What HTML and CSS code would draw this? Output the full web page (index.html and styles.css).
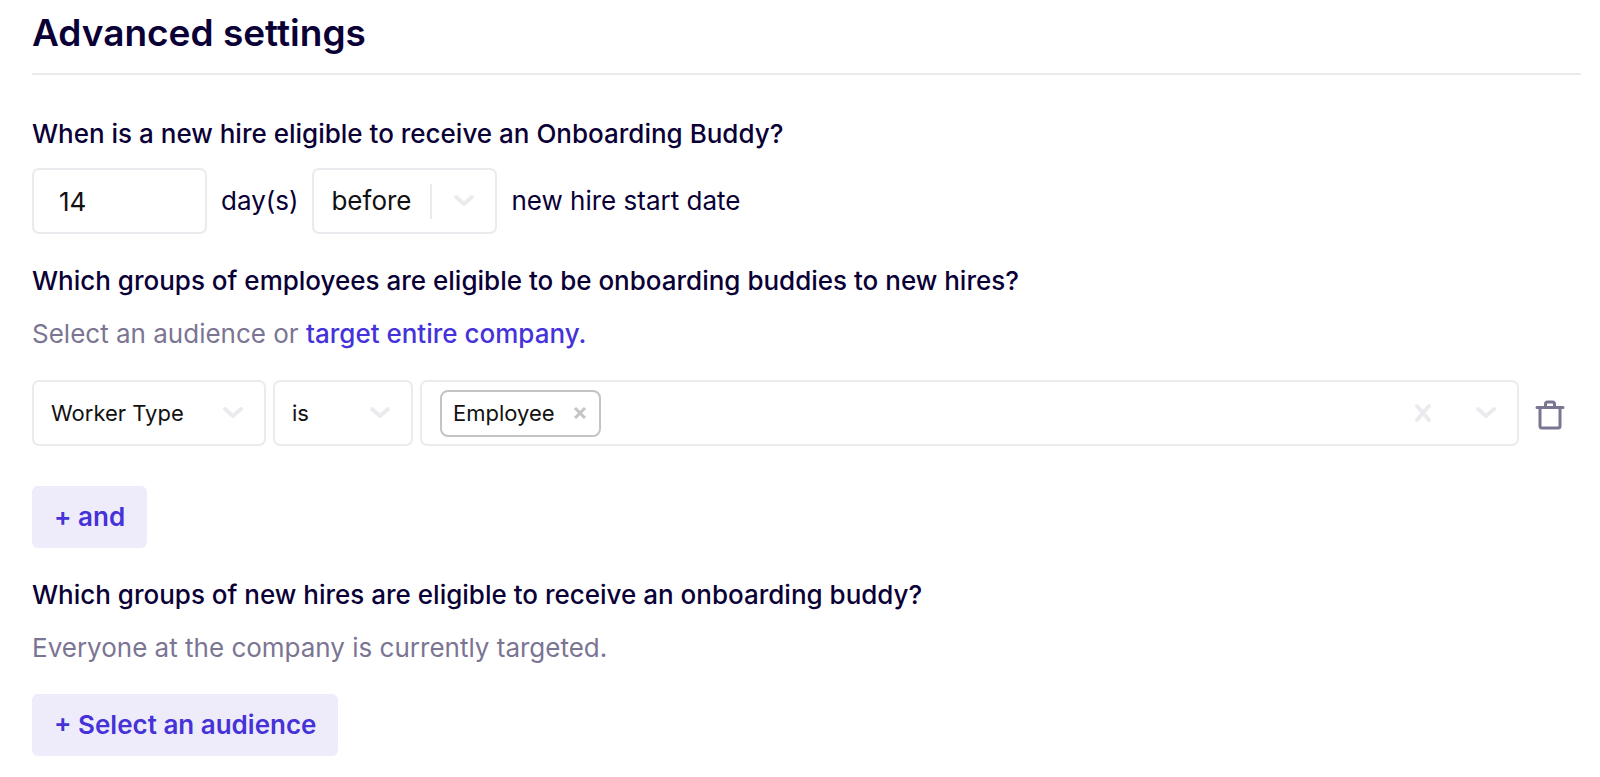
FILE: index.html
```html
<!DOCTYPE html>
<html lang="en">
<head>
<meta charset="utf-8">
<title>Advanced settings</title>
<link rel="stylesheet" href="styles.css">
</head>
<body>
<svg class="sprite" aria-hidden="true">
  <symbol id="chevron" viewBox="0 0 22 14"><path d="M3 3l8 7 8-7" fill="none" stroke="currentColor" stroke-width="4" stroke-linecap="round" stroke-linejoin="round"/></symbol>
  <symbol id="cross" viewBox="0 0 18 20"><path d="M3 3l12 14M15 3L3 17" fill="none" stroke="currentColor" stroke-width="4" stroke-linecap="round"/></symbol>
</svg>
<main class="settings">
  <h1 class="title">Advanced settings</h1>

  <section class="block">
    <h2 class="question">When is a new hire eligible to receive an Onboarding Buddy?</h2>
    <div class="timing">
      <input class="days" id="days" type="text" inputmode="numeric" value="14">
      <label class="text" for="days">day(s)</label>
      <div class="select select-when">
        <select id="when" aria-label="Before or after"><option>before</option><option>after</option></select>
        <svg class="chevron"><use href="#chevron"/></svg>
      </div>
      <label class="text" for="when">new hire start date</label>
    </div>
  </section>

  <section class="block">
    <h2 class="question">Which groups of employees are eligible to be onboarding buddies to new hires?</h2>
    <p class="hint">Select an audience or <a class="link" href="#">target entire company.</a></p>
    <div class="rule">
      <div class="select select-field">
        <select aria-label="Attribute"><option>Worker Type</option></select>
        <svg class="chevron"><use href="#chevron"/></svg>
      </div>
      <div class="select select-operator">
        <select aria-label="Operator"><option>is</option><option>is not</option></select>
        <svg class="chevron"><use href="#chevron"/></svg>
      </div>
      <div class="values">
        <span class="chip">Employee
          <button class="icon-button chip-remove" type="button" aria-label="Remove Employee"><svg viewBox="0 0 14 14"><path d="M2 2l10 10M12 2L2 12" fill="none" stroke="currentColor" stroke-width="3"/></svg></button>
        </span>
        <input class="values-input" type="text" aria-label="Values">
        <button class="icon-button clear" type="button" aria-label="Clear values"><svg><use href="#cross"/></svg></button>
        <button class="icon-button toggle" type="button" aria-label="Show values"><svg><use href="#chevron"/></svg></button>
      </div>
      <button class="icon-button trash" type="button" aria-label="Delete rule">
        <svg viewBox="0 0 30 30" fill="none" stroke="currentColor" stroke-width="3" stroke-linecap="round" stroke-linejoin="round"><path d="M2 7.500h26M5 8v18q0 2 2 2h16q2 0 2-2V8M10.500 7V4q0-2 2-2h5q2 0 2 2v3"/></svg>
      </button>
    </div>
    <button class="add" type="button">+ and</button>
  </section>

  <section class="block">
    <h2 class="question">Which groups of new hires are eligible to receive an onboarding buddy?</h2>
    <p class="hint">Everyone at the company is currently targeted.</p>
    <button class="add add-audience" type="button">+ Select an audience</button>
  </section>
</main>
</body>
</html>
```
FILE: styles.css
```css
* { box-sizing: border-box; }

body {
  margin: 0;
  background: #fff;
  color: #0a0036;
  font-family: Inter, "Liberation Sans", sans-serif;
  font-size: 26px;
  line-height: 32px;
}

button, input, select { font: inherit; margin: 0; }
svg { display: block; }
.sprite { position: absolute; width: 0; height: 0; }

.settings { padding: 11px 19px 20px 32px; }

.title {
  margin: 0 0 43px;
  padding-bottom: 18px;
  border-bottom: 2px solid #ebebef;
  font-size: 37px;
  line-height: 44px;
  font-weight: 600;
}

.block {
  display: flex;
  flex-direction: column;
  align-items: flex-start;
  margin-bottom: 31px;
}

.question { margin: 0 0 18px; font-size: 26px; font-weight: 500; }
.hint { margin: 3px 0 30px; color: #7b7593; }
.link { color: #4532d8; font-weight: 500; text-decoration: none; }

.timing { display: flex; align-items: center; gap: 14px; }

.days {
  width: 175px;
  height: 66px;
  padding: 0 25px;
  border: 2px solid #ebebef;
  border-radius: 7px;
  background: #fff;
  color: #111;
}

.select { display: grid; align-items: center; color: #ebebef; }
.select > * { grid-area: 1 / 1; }
.select select {
  width: 100%;
  height: 66px;
  padding: 0 17px;
  border: 2px solid #ebebef;
  border-radius: 7px;
  background: #fff;
  color: #111;
  appearance: none;
}
.chevron {
  width: 22px;
  height: 14px;
  margin-right: 22px;
  justify-self: end;
  pointer-events: none;
}
.select-when { width: 185px; }
.select-when::before {
  content: "";
  grid-area: 1 / 1;
  justify-self: end;
  z-index: 1;
  width: 2px;
  height: 35px;
  margin-right: 65px;
  background: #ebebef;
}

.rule { display: flex; align-items: center; align-self: stretch; gap: 7px; font-size: 22px; }
.select-field { width: 234px; }
.select-operator { width: 140px; }

.values {
  display: flex;
  flex: 1;
  align-items: center;
  min-width: 0;
  height: 66px;
  padding: 0 20px 0 18px;
  border: 2px solid #ebebef;
  border-radius: 7px;
  color: #ebebef;
}
.chip {
  display: flex;
  align-items: center;
  gap: 18px;
  height: 47px;
  padding: 0 12px 0 11px;
  border: 2px solid #c4c4c6;
  border-radius: 8px;
  color: #111;
}
.values-input { flex: 1; min-width: 0; border: 0; outline: 0; background: none; }

.icon-button { padding: 0; border: 0; background: none; color: inherit; cursor: pointer; }
.chip-remove { color: #c4c4c6; }
.chip-remove svg { width: 14px; height: 14px; }
.clear svg { width: 18px; height: 20px; }
.toggle { margin-left: 43px; }
.toggle svg { width: 22px; height: 14px; }
.trash { margin: 4px 16px 0 9px; color: #7b7593; }
.trash svg { width: 30px; height: 30px; }

.add {
  margin-top: 40px;
  padding: 15px 22px;
  border: 0;
  border-radius: 6px;
  background: #eeecfb;
  color: #4532d8;
  font-weight: 600;
  cursor: pointer;
}
.add-audience { margin-top: 0; }
```
